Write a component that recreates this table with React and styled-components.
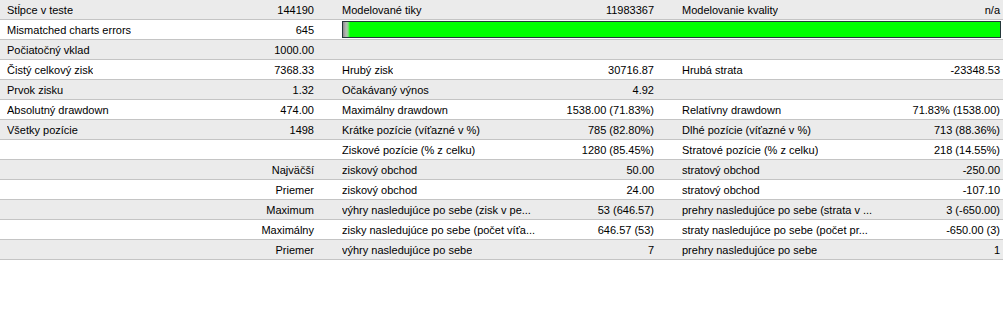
import React from 'react';
import styled, { createGlobalStyle } from 'styled-components';

const GlobalStyle = createGlobalStyle`
  html, body {
    margin: 0;
    padding: 0;
    background: #ffffff;
  }
  body {
    font-family: "Liberation Sans", Arial, sans-serif;
    font-size: 11px;
    color: #000;
  }
`;

const Report = styled.div`
  width: 1003px;
  display: flex;
  flex-direction: column;
`;

const Row = styled.div`
  display: grid;
  grid-template-columns: 335px 340px 328px;
  height: 20px;
  box-sizing: border-box;
  border-bottom: 1px solid #c4c4c4;
  background: ${({ shaded }) => (shaded ? '#ebebeb' : '#ffffff')};
`;

const Group = styled.div`
  display: flex;
  align-items: center;
  justify-content: space-between;
  padding: 0 ${({ last }) => (last ? '3px' : '21px')} 0 7px;
  white-space: nowrap;
  min-width: 0;
`;

const Label = styled.span`
  overflow: hidden;
`;

const Value = styled.span`
  margin-left: auto;
  text-align: right;
`;

const BarCell = styled.div`
  grid-column: 2 / 4;
  display: flex;
  align-items: center;
  padding: 0 2px 0 7px;
`;

const Bar = styled.div`
  flex: 1;
  height: 17px;
  box-sizing: border-box;
  border: 1px solid #24383a;
  background: linear-gradient(
    to right,
    #8a8a8a 0px,
    #b8b8b8 3px,
    #8fd88f 5px,
    #00ff00 7px,
    #00ff00 100%
  );
`;

const rows = [
  [['Stĺpce v teste', '144190'], ['Modelované tiky', '11983367'], ['Modelovanie kvality', 'n/a']],
  'bar',
  [['Počiatočný vklad', '1000.00'], null, null],
  [['Čistý celkový zisk', '7368.33'], ['Hrubý zisk', '30716.87'], ['Hrubá strata', '-23348.53']],
  [['Prvok zisku', '1.32'], ['Očakávaný výnos', '4.92'], null],
  [['Absolutný drawdown', '474.00'], ['Maximálny drawdown', '1538.00 (71.83%)'], ['Relatívny drawdown', '71.83% (1538.00)']],
  [['Všetky pozície', '1498'], ['Krátke pozície (víťazné v %)', '785 (82.80%)'], ['Dlhé pozície (víťazné v %)', '713 (88.36%)']],
  [null, ['Ziskové pozície (% z celku)', '1280 (85.45%)'], ['Stratové pozície (% z celku)', '218 (14.55%)']],
  [['', 'Najväčší'], ['ziskový obchod', '50.00'], ['stratový obchod', '-250.00']],
  [['', 'Priemer'], ['ziskový obchod', '24.00'], ['stratový obchod', '-107.10']],
  [['', 'Maximum'], ['výhry nasledujúce po sebe (zisk v pe...', '53 (646.57)'], ['prehry nasledujúce po sebe (strata v ...', '3 (-650.00)']],
  [['', 'Maximálny'], ['zisky nasledujúce po sebe (počet víťa...', '646.57 (53)'], ['straty nasledujúce po sebe (počet pr...', '-650.00 (3)']],
  [['', 'Priemer'], ['výhry nasledujúce po sebe', '7'], ['prehry nasledujúce po sebe', '1']],
];

const Mismatched = () => (
  <Row>
    <Group>
      <Label>Mismatched charts errors</Label>
      <Value>645</Value>
    </Group>
    <BarCell>
      <Bar />
    </BarCell>
  </Row>
);

export default function App() {
  return (
    <>
      <GlobalStyle />
      <Report>
        {rows.map((row, i) =>
          row === 'bar' ? (
            <Mismatched key={i} />
          ) : (
            <Row key={i} shaded={i % 2 === 0}>
              {row.map((cell, j) => (
                <Group key={j} last={j === 2}>
                  {cell && <Label>{cell[0]}</Label>}
                  {cell && <Value>{cell[1]}</Value>}
                </Group>
              ))}
            </Row>
          )
        )}
      </Report>
    </>
  );
}
